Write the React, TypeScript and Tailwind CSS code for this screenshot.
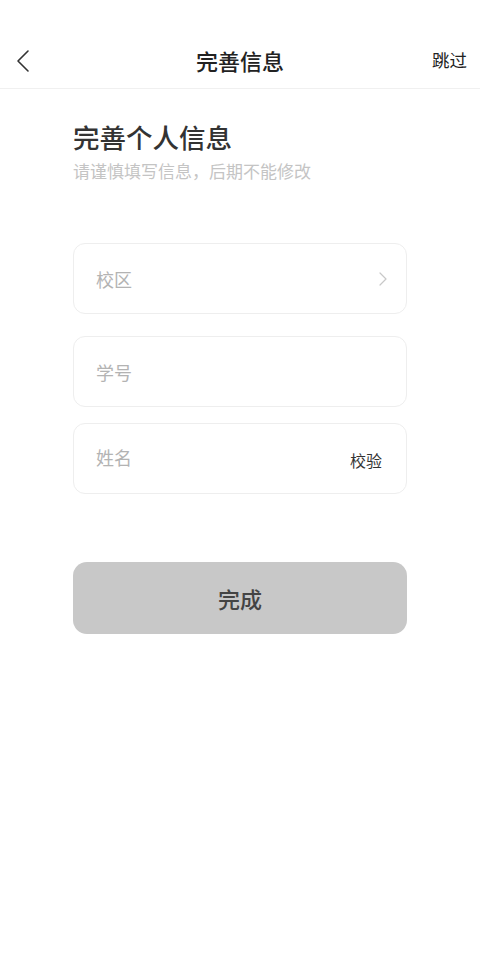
const font = { fontFamily: '"Noto Sans CJK SC", "Noto Sans", sans-serif' };

function Field({ label, children, className = '', labelClass = '' }: { label: string; children?: React.ReactNode; className?: string; labelClass?: string }) {
    return (
        <div className={`flex h-[71px] items-center justify-between rounded-[12px] border border-[#eeeeee] bg-white pl-[22px] pr-[22px] ${className}`}>
            <span className={`text-[18px] leading-none text-[#b3b3b3] ${labelClass}`}>{label}</span>
            {children}
        </div>
    );
}

export default function App() {
    return (
        <div className="flex h-[960px] w-[480px] flex-col bg-white" style={font}>
            {/* Header */}
            <div className="mt-[33px] grid h-[56px] grid-cols-[80px_1fr_80px] items-center border-b border-[#f0f0f0] px-[13px]">
                <svg width="20" height="24" viewBox="0 0 20 24" fill="none">
                    <path d="M15 2 L5 12 L15 22" stroke="#333" strokeWidth="1.6" strokeLinecap="round" strokeLinejoin="round" />
                </svg>
                <h1 className="text-center text-[22px] font-medium text-[#222]">完善信息</h1>
                <span className="text-right text-[17.5px] text-[#222]">跳过</span>
            </div>

            {/* Content */}
            <div className="flex flex-col px-[73px]">
                <h2 className="mt-[31px] text-[26.5px] font-medium leading-[34px] text-[#333]">完善个人信息</h2>
                <p className="mt-[6px] text-[17px] leading-[22px] text-[#c4c4c4]">请谨慎填写信息，后期不能修改</p>

                <Field label="校区" className="mt-[61px]">
                    <svg width="10" height="16" viewBox="0 0 10 16" fill="none" className="mr-[-4px]">
                        <path d="M2 2 L8 8 L2 14" stroke="#c8c8c8" strokeWidth="1.2" strokeLinecap="round" strokeLinejoin="round" />
                    </svg>
                </Field>
                <Field label="学号" className="mt-[22px]" />
                <Field label="姓名" className="mt-[16px]" labelClass="mt-[-4px]">
                    <span className="mr-[2px] mt-[2px] text-[16px] text-[#333]">校验</span>
                </Field>

                <button className="mt-[68px] flex h-[72px] items-center justify-center rounded-[14px] bg-[#c8c8c8] text-[22px] font-medium text-[#444]">
                    完成
                </button>
            </div>
        </div>
    );
}
